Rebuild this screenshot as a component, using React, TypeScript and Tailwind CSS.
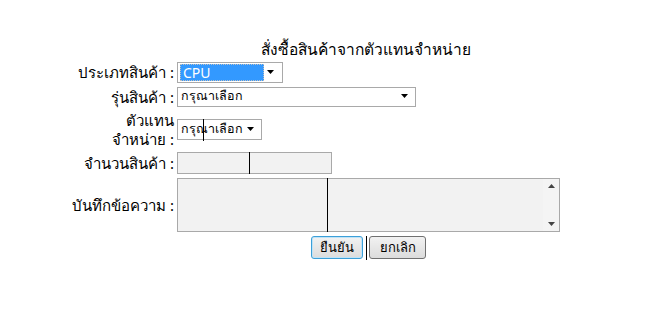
import React from "react";

const thai = "font-['Tahoma','Noto_Sans','DejaVu_Sans',sans-serif]";

function Arrow() {
  return (
    <svg width="8" height="5" viewBox="0 0 8 5" className="shrink-0">
      <path d="M0 0h7L3.5 4z" fill="#000" />
    </svg>
  );
}

function Label({ children }: { children: React.ReactNode }) {
  return <div className="pr-[3px] text-right text-[15px] leading-[18px] text-black">{children}</div>;
}

export default function App() {
  return (
    <div className={`h-[329px] w-[667px] bg-white ${thai}`}>
      <div className="ml-[56px] grid grid-cols-[121px_383px] grid-rows-[61px_22px_27px_39px_27px_57px_29px] items-center">
        {/* title */}
        <div />
        <div className="self-end pb-[3px] pr-[6px] text-center text-[15.5px] leading-[18px] text-black">
          สั่งซื้อสินค้าจากตัวแทนจำหน่าย
        </div>

        {/* type */}
        <Label>ประเภทสินค้า :</Label>
        <div className="flex">
          <div className="flex h-[21px] w-[106px] items-center border border-[#a9a9a9] bg-white pl-[2px] pr-[7px]">
            <span className="flex h-[17px] w-[84px] items-center border border-dotted border-[#c0c0c0] bg-[#3399ff] px-[2px] text-[14px] text-white">
              CPU
            </span>
            <span className="ml-auto">
              <Arrow />
            </span>
          </div>
        </div>

        {/* model */}
        <Label>รุ่นสินค้า :</Label>
        <div className="flex">
          <div className="flex h-[20px] w-[239px] items-center border border-[#a9a9a9] bg-white pl-[3px] pr-[6px] text-[12.5px]">
            <span>กรุณาเลือก</span>
            <span className="ml-auto">
              <Arrow />
            </span>
          </div>
        </div>

        {/* dealer */}
        <div className="pr-[3px] text-right text-[15px] leading-[19px] text-black">
          <div>ตัวแทน</div>
          <div>จำหน่าย :</div>
        </div>
        <div className="flex">
          <div className="relative flex h-[21px] w-[85px] items-center border border-[#a9a9a9] bg-white pl-[3px] pr-[6px] text-[12.5px]">
            <span>กรุณาเลือก</span>
            <span className="ml-auto">
              <Arrow />
            </span>
            <span className="absolute left-[25px] top-[-1px] h-[22px] w-px bg-black" />
          </div>
        </div>

        {/* qty */}
        <Label>จำนวนสินค้า :</Label>
        <div className="flex">
          <div className="relative h-[22px] w-[155px] border border-[#a9a9a9] bg-[#f2f2f2]">
            <span className="absolute left-[71px] top-[-1px] h-[22px] w-px bg-black" />
          </div>
        </div>

        {/* note */}
        <Label>บันทึกข้อความ :</Label>
        <div className="flex">
          <div className="relative flex h-[54px] w-[383px] border border-[#a9a9a9] bg-[#f2f2f2]">
            <div className="flex-1" />
            <div className="flex w-[16px] flex-col items-center justify-between bg-[#f4f4f4] py-[5px]">
              <svg width="7" height="4" viewBox="0 0 7 4">
                <path d="M0 4h7L3.5 0z" fill="#444" />
              </svg>
              <svg width="7" height="4" viewBox="0 0 7 4">
                <path d="M0 0h7L3.5 4z" fill="#444" />
              </svg>
            </div>
            <span className="absolute left-[149px] top-[-1px] h-[54px] w-px bg-black" />
          </div>
        </div>

        {/* buttons */}
        <div />
        <div className="flex justify-center gap-[6px]">
          <button className="relative h-[23px] w-[52px] rounded-[3px] border border-[#3c9fd8] bg-gradient-to-b from-[#f2f2f2] to-[#dcdcdc] text-[13px] text-black shadow-[inset_0_0_0_1px_#bfe3f7]">
            ยืนยัน
            <span className="absolute right-[-5px] top-[-1px] h-[24px] w-px bg-black" />
          </button>
          <button className="h-[23px] w-[57px] rounded-[3px] border border-[#707070] bg-gradient-to-b from-[#f2f2f2] to-[#dcdcdc] text-[13px] text-black">
            ยกเลิก
          </button>
        </div>
      </div>
    </div>
  );
}
